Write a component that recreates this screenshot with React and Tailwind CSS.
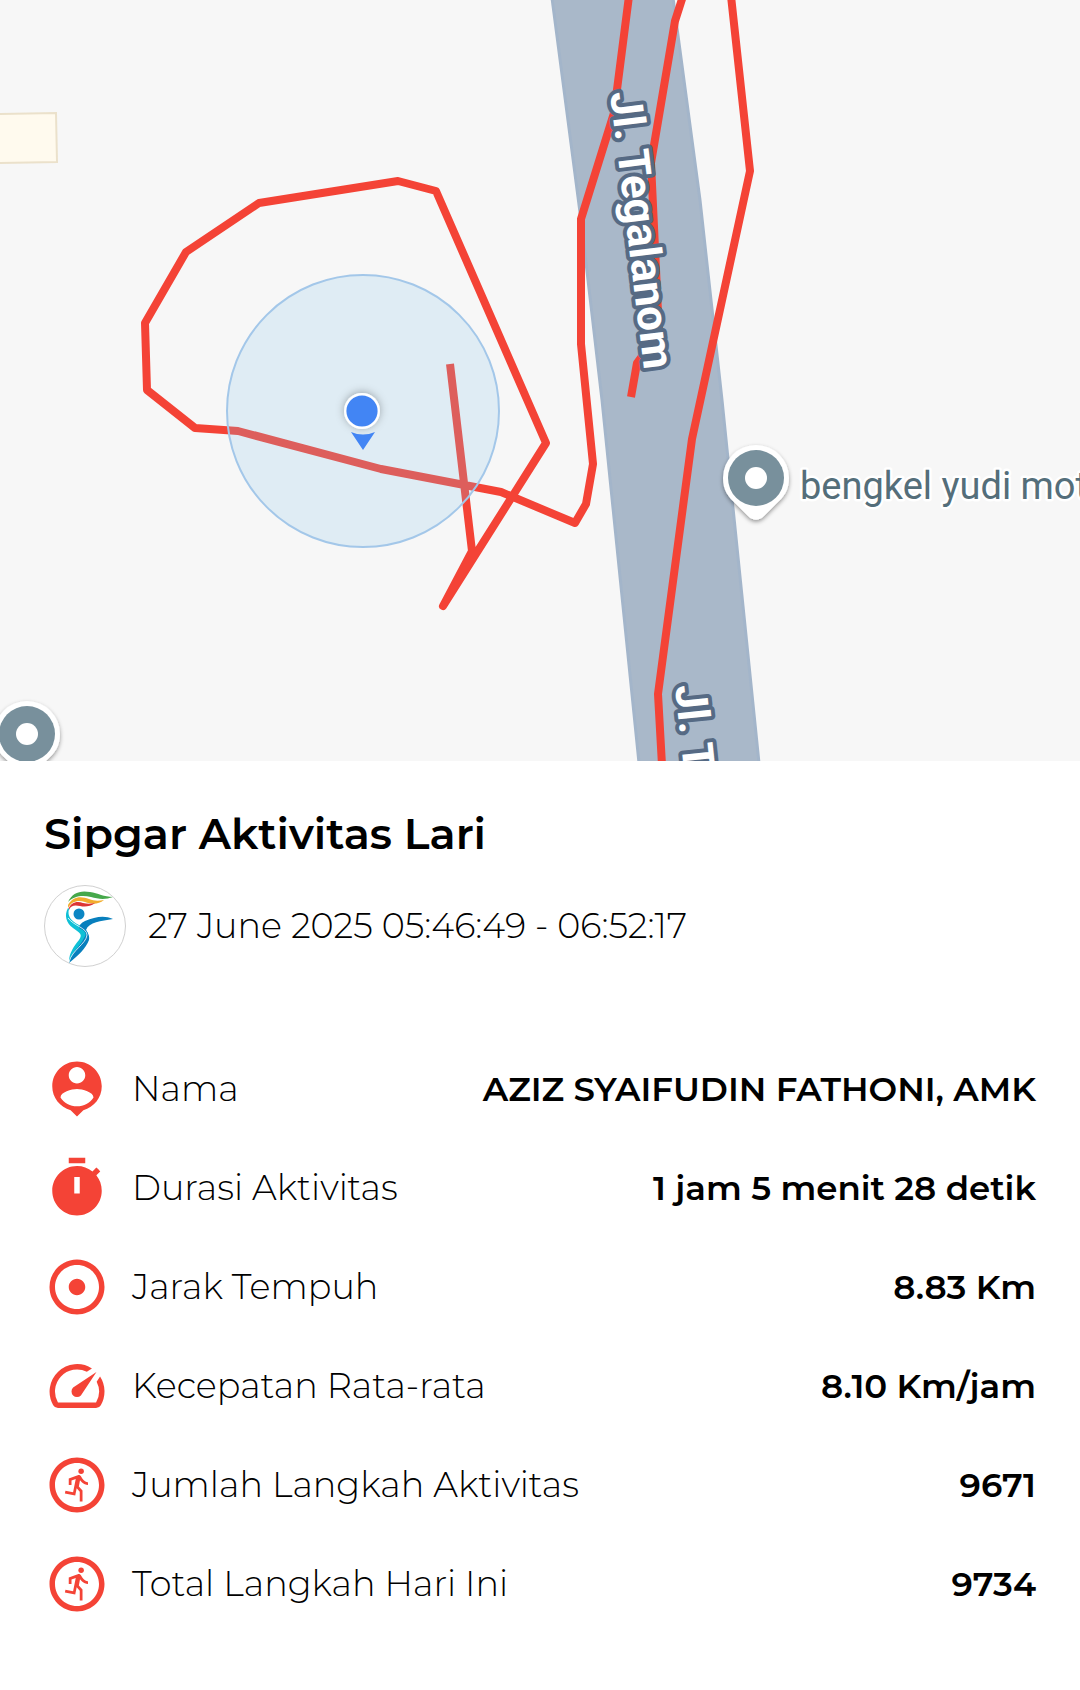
import { MdAdjust, MdOutlineRunCircle, MdSpeed } from "react-icons/md";

function PersonPinIcon({ className }) {
  return (
    <svg viewBox="0 0 24 24" fill="currentColor" className={className} aria-hidden="true">
      <path d="M12 2C7 2 3 6 3 11c0 4.17 2.84 7.67 6.69 8.69L12 22l2.31-2.31C18.16 18.67 21 15.17 21 11c0-5-4-9-9-9zm0 2c1.66 0 3 1.34 3 3s-1.34 3-3 3-3-1.34-3-3 1.34-3 3-3zm0 14.3c-2.5 0-4.71-1.28-6-3.22.03-1.99 4-3.08 6-3.08 1.99 0 5.97 1.09 6 3.08-1.29 1.94-3.5 3.22-6 3.22z" />
    </svg>
  );
}

function StopwatchIcon({ className }) {
  return (
    <svg viewBox="0 0 24 24" fill="currentColor" fillRule="evenodd" className={className} aria-hidden="true">
      <path d="M15 1H9v2h6V1zm-4 13h2V8h-2v6zm8.03-6.61l1.42-1.42c-.43-.51-.9-.99-1.41-1.41l-1.42 1.42C16.07 4.74 14.12 4 12 4c-4.97 0-9 4.03-9 9s4.02 9 9 9 9-4.03 9-9c0-2.12-.74-4.07-1.97-5.61z" />
    </svg>
  );
}

function PlacePin({ x, y }) {
  return (
    <g transform={`translate(${x} ${y})`}>
      <path
        d="M0-33A33 33 0 0 1 33 0C33 12 28 19 20 26L8 38C3 43-3 43-8 38L-20 26C-28 19-33 12-33 0A33 33 0 0 1 0-33Z"
        fill="#fff"
        filter="url(#pin-shadow)"
      />
      <circle r="28" fill="#78909c" />
      <circle r="11" fill="#fff" />
    </g>
  );
}

function RouteMap() {
  const street = {
    fontFamily: '"Roboto", sans-serif',
    fontWeight: 700,
    fontSize: 44,
    fill: "#fff",
    stroke: "#566a84",
    strokeWidth: 8,
    strokeLinejoin: "round",
    paintOrder: "stroke",
  };
  return (
    <svg viewBox="0 0 1080 761" className="block w-full bg-[#f7f7f7]" role="img" aria-label="Peta rute lari">
      <defs>
        <filter id="pin-shadow" x="-30%" y="-30%" width="160%" height="160%">
          <feDropShadow dx="0" dy="2" stdDeviation="2" floodColor="#000" floodOpacity="0.4" />
        </filter>
        <filter id="dot-shadow" x="-60%" y="-60%" width="220%" height="220%">
          <feDropShadow dx="0" dy="-1" stdDeviation="4" floodColor="#000" floodOpacity="0.3" />
        </filter>
      </defs>

      <path d="M-4 114 56 113 57 162-4 163Z" fill="#fffaee" stroke="#ebe1cb" strokeWidth="2" />
      <path
        d="M552 -2 581 220 602 400 639 763H759L722 400 700 200 673 -2Z"
        fill="#a9b8c9"
        stroke="#a3b5ca"
        strokeWidth="3"
      />

      <g fill="none" stroke="#f44336" strokeWidth="8" strokeLinejoin="round">
        <path d="M450 364 472 551 443 606 546 443 436 191 398 181 259 203 186 252 145 323 147 390 195 428 238 431 381 469 501 492 575 523 586 504 593 464 581 344 581 219 614 113 629 -4" />
        <path d="M683 -4 675 21 651 163 659 333 637 363 631 397" />
        <path d="M731 -4 750 171 692 439 658 694 662 765" />
      </g>

      <circle cx="363" cy="411" r="136" fill="#8bc8ee" fillOpacity="0.21" stroke="#a3c7e9" strokeWidth="2" />
      <circle cx="362" cy="411" r="18" fill="#fff" filter="url(#dot-shadow)" />
      <circle cx="362" cy="411" r="15.6" fill="#4285f4" />
      <path d="M351 432Q363 437 375 432L363 450Z" fill="#4285f4" />

      <text transform="translate(610 93) rotate(83)" style={street}>Jl. Tegalanom</text>
      <text transform="translate(675 686) rotate(84)" style={street}>Jl. Tegalanom</text>

      <PlacePin x={756} y={478} />
      <PlacePin x={27} y={734} />
      <text
        x="800"
        y="499"
        fontFamily='"Roboto", sans-serif'
        fontSize="38"
        fill="#546e7a"
        stroke="#fff"
        strokeWidth="5"
        strokeLinejoin="round"
        paintOrder="stroke"
      >
        bengkel yudi mot
      </text>
    </svg>
  );
}

function SipgarLogo() {
  return (
    <svg viewBox="0 0 82 82" className="size-[82px] shrink-0" role="img" aria-label="Sipgar">
      <circle cx="41" cy="41" r="40.5" fill="#fff" stroke="#c4c4c4" strokeWidth="0.8" />
      <path d="M24 17C28 8 36 5 46 7C54 8 60 12 69 12C61 15 54 14 47 12C38 10 30 11 24 17Z" fill="#46a84b" />
      <path d="M24 20C29 11 37 11 45 14C50 16 54 16 60 15C54 20 47 19 41 17C34 15 28 16 24 23Z" fill="#f2ad2e" />
      <path d="M24 25C27 17 33 16 39 18C43 19 47 19 51 18C46 22 40 22 36 21C31 20 27 20 25 25Z" fill="#dc3535" />
      <circle cx="35" cy="29" r="5.5" fill="#0b86c4" />
      <path d="M24 23C20 30 22 38 29 43C36 48 39 49 35 55C30 61 25 68 25 77C31 69 38 63 43 55C47 48 41 43 35 40C27 36 23 31 25 24Z" fill="#0fc0d6" />
      <path d="M35 43C42 46 43 49 40 53C35 63 28 66 25 78C34 71 42 63 45 55C46 50 43 47 42 45C45 37 57 36 69 34C60 30 51 32 41 36C37 38 35 40 35 43Z" fill="#087fbd" />
      <path d="M24 33C30 41 43 43 43 50C42 59 28 65 25 77" fill="none" stroke="#fff" strokeWidth="0.8" />
    </svg>
  );
}

const stats = [
  { icon: PersonPinIcon, label: "Nama", value: "AZIZ SYAIFUDIN FATHONI, AMK" },
  { icon: StopwatchIcon, label: "Durasi Aktivitas", value: "1 jam 5 menit 28 detik" },
  { icon: MdAdjust, label: "Jarak Tempuh", value: "8.83 Km" },
  { icon: MdSpeed, label: "Kecepatan Rata-rata", value: "8.10 Km/jam" },
  { icon: MdOutlineRunCircle, label: "Jumlah Langkah Aktivitas", value: "9671" },
  { icon: MdOutlineRunCircle, label: "Total Langkah Hari Ini", value: "9734" },
];

export default function App() {
  return (
    <main className="min-h-screen bg-white font-['Montserrat','Inter',sans-serif] text-black">
      <RouteMap />
      <section className="px-11 pt-12">
        <h1 className="text-[43px] leading-[50px] font-semibold">Sipgar Aktivitas Lari</h1>
        <div className="mt-[26px] flex items-center gap-[22px]">
          <SipgarLogo />
          <p className="text-[35px] leading-11 font-light">27 June 2025 05:46:49 - 06:52:17</p>
        </div>
        <dl className="mt-[72px]">
          {stats.map(({ icon: Icon, label, value }) => (
            <div key={label} className="flex h-[99px] items-center justify-between">
              <dt className="flex items-center gap-[22px] text-[35px] leading-11 font-light">
                <Icon className="size-[66px] shrink-0 text-[#f44336]" />
                {label}
              </dt>
              <dd className="text-right text-[34px] leading-11 font-semibold">{value}</dd>
            </div>
          ))}
        </dl>
      </section>
    </main>
  );
}
